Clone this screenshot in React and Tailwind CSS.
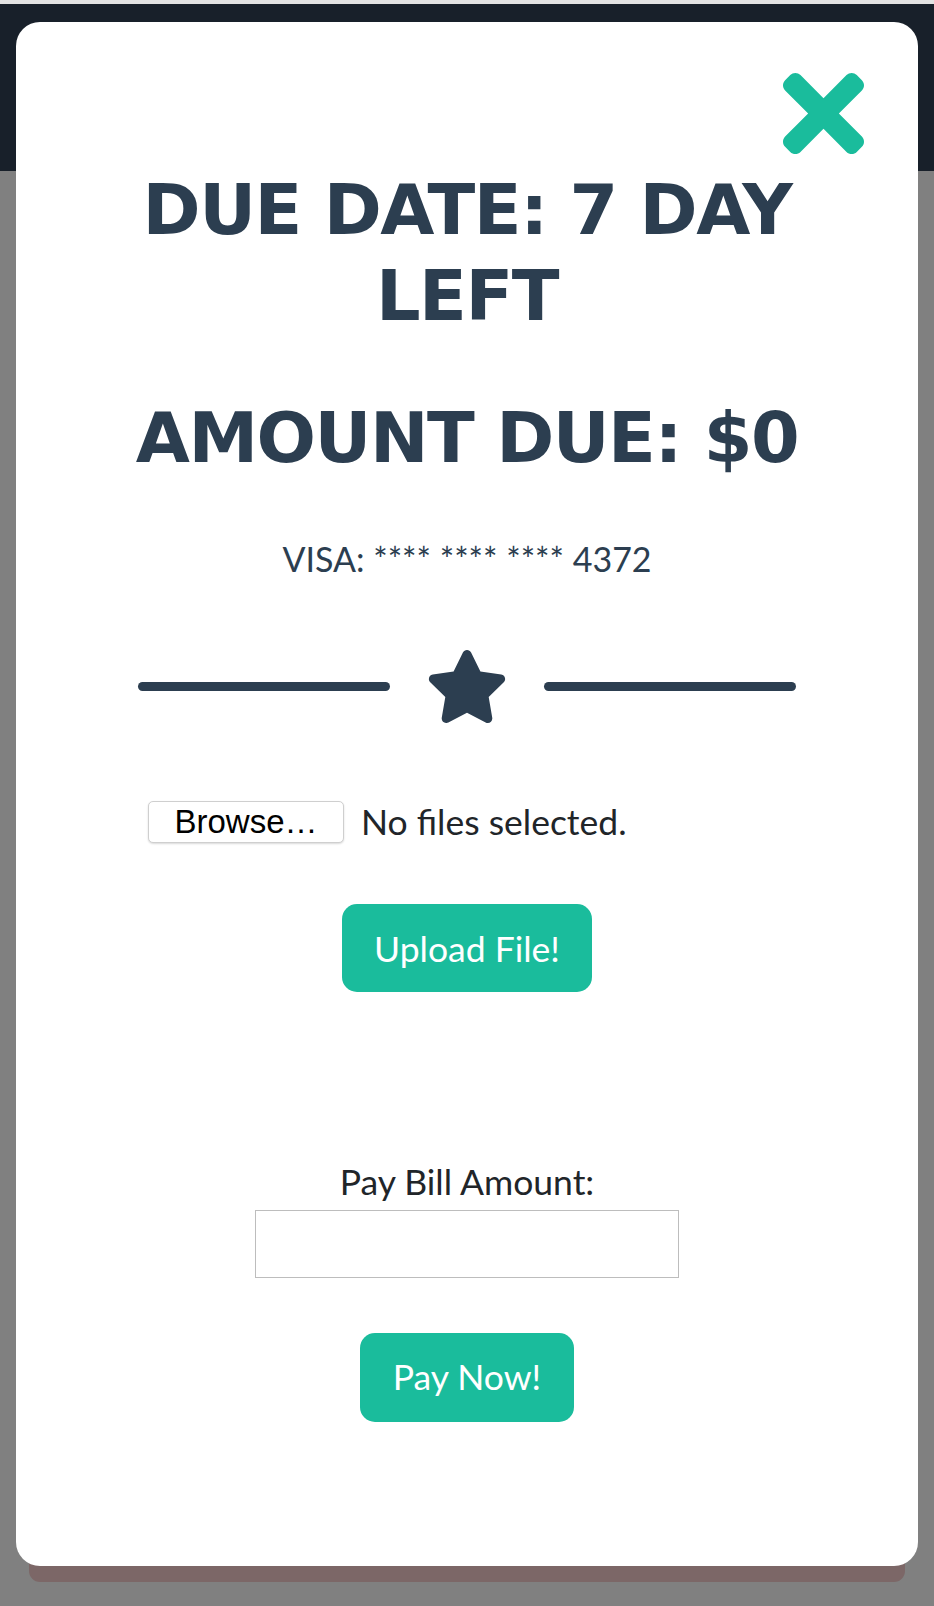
import React from 'react';

const CloseIcon = () => (
  <svg viewBox="0 80 352 352" width="81" height="81" className="fill-[#1abc9c]">
    <path d="M242.72 256l100.07-100.07c12.28-12.28 12.28-32.19 0-44.48l-22.24-22.24c-12.28-12.28-32.19-12.28-44.48 0L176 189.28 75.93 89.21c-12.28-12.28-32.19-12.28-44.48 0L9.21 111.45c-12.28 12.28-12.28 32.19 0 44.48L109.28 256 9.21 356.07c-12.28 12.28-12.28 32.19 0 44.48l22.24 22.24c12.28 12.28 32.2 12.28 44.48 0L176 322.72l100.07 100.07c12.28 12.28 32.2 12.28 44.48 0l22.24-22.24c12.28-12.28 12.28-32.19 0-44.48L242.72 256z" />
  </svg>
);

const StarIcon = () => (
  <svg viewBox="17 0 542 512" width="78" height="73" className="fill-[#2c3e50]">
    <path d="M259.3 17.8L194 150.2 47.9 171.5c-26.2 3.8-36.7 36.1-17.7 54.6l105.7 103-25 145.5c-4.5 26.3 23.2 46 46.4 33.7L288 439.6l130.7 68.7c23.2 12.2 50.9-7.4 46.4-33.7l-25-145.5 105.7-103c19-18.5 8.5-50.8-17.7-54.6L382 150.2 316.7 17.8c-11.7-23.6-45.6-23.9-57.4 0z" />
  </svg>
);

const App = () => {
  return (
    <div className="relative min-h-[1606px] bg-[#808080] font-['Lato',sans-serif]">
      <div className="h-[4px] bg-[#e3e3e3]" />
      <div className="h-[167px] bg-[#18202a]" />

      {/* modal */}
      <div className="absolute top-[22px] left-[16px] w-[902px] bg-white rounded-[24px] shadow-[0_29px_0_-13px_#7c6767] px-[122px] pb-[144px] flex flex-col items-center">
        <div className="self-end -mr-[68px] mt-[51px]">
          <CloseIcon />
        </div>

        <h1 className="mt-[13px] w-[700px] text-center font-['DejaVu_Sans',sans-serif] font-bold uppercase text-[70px] leading-[86px] tracking-[-1.5px] text-[#2c3e50]">
          Due Date: 7 Day Left
        </h1>
        <h2 className="mt-[56px] w-[760px] whitespace-nowrap text-center font-['DejaVu_Sans',sans-serif] font-bold uppercase text-[70px] leading-[86px] tracking-[-1.5px] text-[#2c3e50]">
          Amount Due: $0
        </h2>

        <p className="mt-[52px] text-[34px] leading-[1.5] text-[#2c3e50]">VISA: **** **** **** 4372</p>

        <div className="mt-[66px] w-full flex items-center justify-between">
          <div className="w-[252px] h-[9px] rounded-full bg-[#2c3e50]" />
          <StarIcon />
          <div className="w-[252px] h-[9px] rounded-full bg-[#2c3e50]" />
        </div>

        <div className="mt-[72px] self-start ml-[10px] flex items-center gap-[17px]">
          <div className="h-[42px] w-[196px] flex items-center justify-center rounded-[5px] border border-[#cfcfcf] bg-white shadow-[0_1px_2px_rgba(0,0,0,0.15)] font-['Liberation_Sans',sans-serif] text-[33px] text-black">
            Browse…
          </div>
          <span className="text-[35.5px] text-[#212529]">No files selected.</span>
        </div>

        <button className="mt-[56px] h-[88px] px-[32px] rounded-[15px] bg-[#1abc9c] text-white text-[35.5px]">
          Upload File!
        </button>

        <label className="mt-[163px] text-[35.5px] leading-[1.5] text-[#212529]">Pay Bill Amount:</label>
        <input type="text" className="mt-[1px] w-[424px] h-[68px] border border-[#bdbdbd] bg-white outline-none" />

        <button className="mt-[55px] h-[89px] px-[33px] rounded-[15px] bg-[#1abc9c] text-white text-[35.5px]">
          Pay Now!
        </button>
      </div>
    </div>
  );
};

export default App;
